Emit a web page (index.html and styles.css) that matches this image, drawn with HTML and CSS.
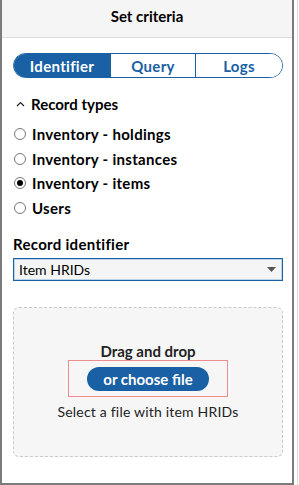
FILE: index.html
```html
<!DOCTYPE html>
<html lang="en">

<head>
    <meta charset="UTF-8">
    <meta name="viewport" content="width=device-width, initial-scale=1.0">
    <title>Set criteria</title>
    <link rel="stylesheet" href="styles.css">
</head>

<body>

    <div class="painel">
        <div class="cabecalho">
            <h2 class="titulo">Set criteria</h2>
        </div>

        <div class="conteudo">
            <div class="abas">
                <button class="aba aba-ativa">Identifier</button>
                <button class="aba aba-query">Query</button>
                <button class="aba">Logs</button>
            </div>

            <div class="secao">
                <div class="secao-titulo">
                    <svg class="seta" width="9" height="6" viewBox="0 0 9 6">
                        <path d="M1 5 L4.5 1.5 L8 5" fill="none" stroke="#222" stroke-width="1.2" />
                    </svg>
                    <span>Record types</span>
                </div>

                <label class="opcao"><span class="radio"></span>Inventory - holdings</label>
                <label class="opcao"><span class="radio"></span>Inventory - instances</label>
                <label class="opcao"><span class="radio radio-marcado"></span>Inventory - items</label>
                <label class="opcao"><span class="radio"></span>Users</label>
            </div>

            <p class="rotulo">Record identifier</p>
            <div class="selecao">
                <span>Item HRIDs</span>
                <svg width="9" height="5" viewBox="0 0 9 5">
                    <path d="M0 0 H9 L4.5 5 Z" fill="#555" />
                </svg>
            </div>

            <div class="caixa-arquivo">
                <p class="arrastar">Drag and drop</p>
                <div class="foco">
                    <button class="botao-arquivo">or choose file</button>
                </div>
                <p class="texto-arquivo">Select a file with item HRIDs</p>
            </div>
        </div>
    </div>

    <div class="espaco"></div>
    <div class="proximo"></div>

</body>

</html>
```

FILE: styles.css
```css
* {
    margin: 0;
    padding: 0;
    box-sizing: border-box;
    font-family: 'Lato', sans-serif;
}

body {
    width: 299px;
    height: 485px;
    display: flex;
    background-color: white;
    color: #000;
    overflow: hidden;
}

.painel {
    width: 294px;
    height: 485px;
    border-left: 2px solid #7b7b7b;
    border-right: 2px solid #7b7b7b;
    border-bottom: 2px solid #7b7b7b;
}

.espaco {
    width: 3px;
}

.proximo {
    flex: 1;
    border-left: 1px solid #dcdcdc;
}

.cabecalho {
    height: 38px;
    background-color: #f5f5f5;
    border-bottom: 1px solid #dcdcdc;
    display: flex;
    justify-content: center;
    align-items: center;
    padding-bottom: 5px;
}

.titulo {
    font-size: 15px;
    font-weight: 700;
}

.conteudo {
    padding: 15px 9px 0 11px;
}

.abas {
    display: flex;
    height: 25px;
    border: 1px solid #1960a4;
    border-radius: 13px;
    overflow: hidden;
}

.aba {
    flex: 1;
    border: none;
    border-left: 1px solid #1960a4;
    background-color: white;
    color: #1960a4;
    font-size: 15px;
    font-weight: 700;
    letter-spacing: 0.3px;
}

.aba-ativa {
    flex: 0 0 96px;
    border-left: none;
    background-color: #1960a4;
    color: white;
}

.aba-query {
    flex: 0 0 85px;
}

.secao {
    margin-top: 16px;
}

.secao-titulo {
    display: flex;
    align-items: center;
    gap: 6px;
    font-size: 15px;
    font-weight: 700;
    height: 20px;
    margin-bottom: 8px;
}

.seta {
    margin-left: 3px;
}

.opcao {
    display: flex;
    align-items: center;
    gap: 6px;
    height: 24.5px;
    font-size: 15px;
    font-weight: 700;
    letter-spacing: 0.3px;
}

.radio {
    width: 12px;
    height: 12px;
    margin-left: 1px;
    border: 1px solid #777;
    border-radius: 50%;
    background-color: white;
    display: flex;
    justify-content: center;
    align-items: center;
}

.radio-marcado::after {
    content: "";
    width: 6px;
    height: 6px;
    border-radius: 50%;
    background-color: #000;
}

.rotulo {
    margin-top: 15px;
    font-size: 15px;
    font-weight: 700;
    letter-spacing: 0.3px;
}

.selecao {
    margin-top: 5px;
    height: 23px;
    border: 1px solid #1960a4;
    box-shadow: inset 0 0 0 1px #b9d3ea;
    background-color: #f5f5f5;
    display: flex;
    justify-content: space-between;
    align-items: center;
    padding: 0 6px 0 5px;
    font-size: 14px;
}

.caixa-arquivo {
    margin-top: 26px;
    height: 150px;
    border: 1px dashed #c9c9c9;
    border-radius: 6px;
    background-color: #f6f6f6;
    display: flex;
    flex-direction: column;
    align-items: center;
    padding-top: 34px;
}

.arrastar {
    font-size: 15px;
    font-weight: 700;
    color: #222;
}

.foco {
    margin-top: 0;
    width: 160px;
    height: 37px;
    border: 1px solid #ec8c8c;
    display: flex;
    justify-content: center;
    align-items: center;
}

.botao-arquivo {
    border: none;
    width: 122px;
    height: 24px;
    border-radius: 12px;
    background-color: #1960a4;
    color: white;
    font-size: 15px;
    font-weight: 700;
}

.texto-arquivo {
    margin-top: 6px;
    font-size: 14px;
    color: #222;
    letter-spacing: 0.2px;
}
```
